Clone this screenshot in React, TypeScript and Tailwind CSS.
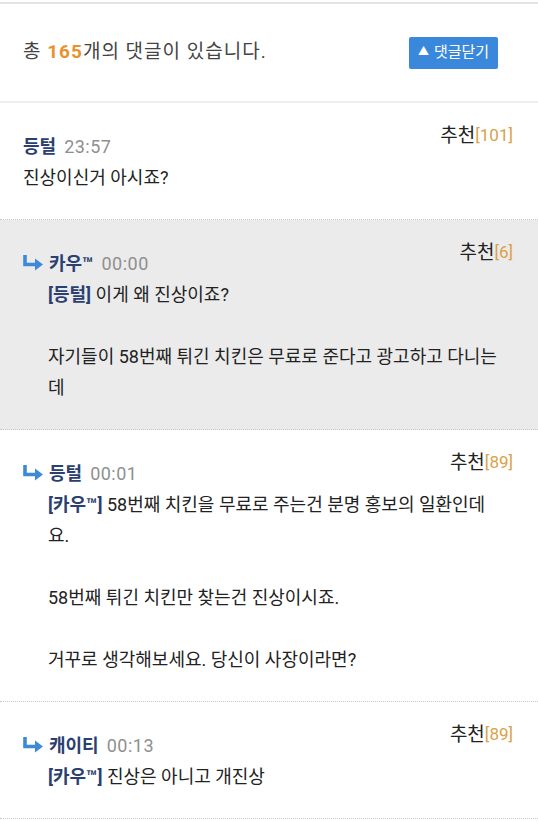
import React from "react";

const FONT = { fontFamily: 'Roboto, "Noto Sans CJK KR", sans-serif' };

function ReplyArrow() {
  return (
    <svg width="21" height="16" viewBox="0 0 21 16" className="shrink-0">
      <path d="M3 0 V9.5 H14" fill="none" stroke="#3f8ad8" strokeWidth="3.6" strokeLinecap="butt" />
      <path d="M13 3.5 L21 9.5 L13 15.5 Z" fill="#3f8ad8" />
    </svg>
  );
}

type C = {
  name: string;
  time: string;
  rec: string;
  reply?: boolean;
  gray?: boolean;
  mention?: string;
  lines: string[];
};

const comments: C[] = [
  { name: "등털", time: "23:57", rec: "101", lines: ["진상이신거 아시죠?"] },
  {
    name: "카우™",
    time: "00:00",
    rec: "6",
    reply: true,
    gray: true,
    mention: "[등털]",
    lines: ["이게 왜 진상이죠?", "", "자기들이 58번째 튀긴 치킨은 무료로 준다고 광고하고 다니는데"],
  },
  {
    name: "등털",
    time: "00:01",
    rec: "89",
    reply: true,
    mention: "[카우™]",
    lines: ["58번째 치킨을 무료로 주는건 분명 홍보의 일환인데요.", "", "58번째 튀긴 치킨만 찾는건 진상이시죠.", "", "거꾸로 생각해보세요. 당신이 사장이라면?"],
  },
  { name: "캐이티", time: "00:13", rec: "89", reply: true, mention: "[카우™]", lines: ["진상은 아니고 개진상"] },
];

function Comment({ c }: { c: C }) {
  return (
    <div
      className={`border-b border-dotted border-[#c8c8c8] pt-[20px] pb-[26px] pl-[22px] pr-[25px] ${
        c.gray ? "bg-[#ebebeb]" : "bg-white"
      }`}
    >
      <div className="flex items-start justify-between">
        <div className="mt-[10px] flex h-[26px] items-center">
          {c.reply && (
            <span className="mr-[6px] flex items-center">
              <ReplyArrow />
            </span>
          )}
          <span className={`text-[18px] font-bold text-[#2b3f70] ${c.reply ? "" : "ml-[1px]"}`}>{c.name}</span>
          <span className="ml-[8px] text-[18px] tracking-[0.5px] text-[#8f8f8f]">{c.time}</span>
        </div>
        <div className="flex h-[26px] items-center">
          <span className="text-[19px] text-[#222]">추천</span>
          <span className="text-[17px] text-[#d9a24a]">[{c.rec}]</span>
        </div>
      </div>
      <div
        className={`mt-[3px] text-[18px] leading-[31px] text-[#222] ${
          c.reply ? "ml-[26px] w-[450px]" : "ml-[1px]"
        }`}
      >
        {c.lines.map((l, i) => (
          <div key={i} className="min-h-[31px]">
            {i === 0 && c.mention && <span className="font-bold text-[#2b3f70]">{c.mention} </span>}
            {l}
          </div>
        ))}
      </div>
    </div>
  );
}

export default function App() {
  return (
    <div className="w-[538px] min-h-[821px] bg-white" style={FONT}>
      <div className="h-[2px] bg-white" />
      <div className="h-[2px] bg-[#e3e3e3]" />
      <div className="flex h-[99px] items-center justify-between border-b-2 border-[#eeeeee] pl-[23px] pr-[40px]">
        <div className="text-[19px] tracking-[1px] text-[#444]">
          총 <span className="font-bold text-[#e8922c]">165</span>개의 댓글이 있습니다.
        </div>
        <button className="flex h-[32px] w-[89px] items-center justify-center gap-[5px] rounded-[2px] bg-[#3a88dc] text-[15px] text-white">
          <span className="text-[11px]">▲</span>
          <span>댓글닫기</span>
        </button>
      </div>
      {comments.map((c, i) => (
        <Comment key={i} c={c} />
      ))}
    </div>
  );
}
